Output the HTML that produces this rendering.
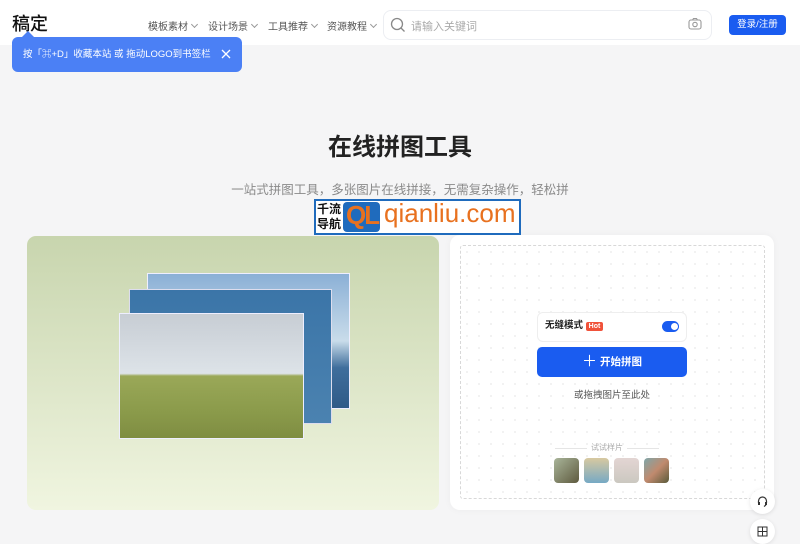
<!DOCTYPE html>
<html><head><meta charset="utf-8"><style>
*{margin:0;padding:0;box-sizing:border-box;white-space:nowrap}
body{width:800px;height:537px;overflow:hidden;background:#f5f5f6;font-family:"Liberation Sans","Noto Sans CJK SC",sans-serif;position:relative;color:#222}
.a{position:absolute}
.hdr{left:0;top:0;width:800px;height:45px;background:#fff}
.nav{top:18px;font-size:10px;color:#555}
.nav::after{content:"";display:inline-block;width:4px;height:4px;border-right:1px solid #999;border-bottom:1px solid #999;transform:rotate(45deg);margin-left:4px;vertical-align:3px}
.sp{width:25px;height:25px;border-radius:4px;top:458px}
</style></head><body>
<div class="a hdr"></div>
<div class="a" style="left:12px;top:10px;font-size:18px;font-weight:500;color:#111">稿定</div>
<div class="a nav" style="left:148px">模板素材</div>
<div class="a nav" style="left:208px">设计场景</div>
<div class="a nav" style="left:268px">工具推荐</div>
<div class="a nav" style="left:327px">资源教程</div>
<div class="a" style="left:383px;top:10px;width:329px;height:30px;border:1px solid #eceef2;border-radius:8px;background:#fff"></div>
<svg class="a" style="left:390px;top:17px" width="16" height="16" viewBox="0 0 16 16"><circle cx="7" cy="7" r="5.5" fill="none" stroke="#888" stroke-width="1.3"/><path d="M11 11l3.5 3.5" stroke="#888" stroke-width="1.3"/></svg>
<div class="a" style="left:411px;top:18px;font-size:11px;color:#aaa">请输入关键词</div>
<svg class="a" style="left:688px;top:17px" width="14" height="14" viewBox="0 0 14 14"><rect x="1" y="3" width="12" height="9" rx="2" fill="none" stroke="#999" stroke-width="1.1"/><path d="M4.5 3l1-1.5h3l1 1.5" fill="none" stroke="#999" stroke-width="1.1"/><circle cx="7" cy="7.5" r="2.2" fill="none" stroke="#999" stroke-width="1.1"/></svg>
<div class="a" style="left:729px;top:15px;width:57px;height:20px;background:#1a5cf0;border-radius:4px;color:#fff;font-size:9.5px;text-align:center;line-height:20px">登录/注册</div>
<div class="a" style="left:22px;top:31px;width:0;height:0;border-left:6px solid transparent;border-right:6px solid transparent;border-bottom:6px solid #4b80f5"></div>
<div class="a" style="left:12px;top:37px;width:230px;height:35px;background:#4b80f5;border-radius:6px;color:#fff;font-size:9.5px;line-height:35px;padding-left:11px">按「⌘+D」收藏本站 或 拖动LOGO到书签栏</div>
<svg class="a" style="left:221px;top:49px" width="10" height="10" viewBox="0 0 10 10"><path d="M1 1l8 8M9 1l-8 8" stroke="#fff" stroke-width="1.3"/></svg>
<div class="a" style="left:0;top:127px;width:800px;text-align:center;font-size:24px;font-weight:bold;color:#222">在线拼图工具</div>
<div class="a" style="left:0;top:179px;width:800px;text-align:center;font-size:12.5px;color:#8a8a8a">一站式拼图工具，多张图片在线拼接，无需复杂操作，轻松拼</div>
<div class="a" style="left:27px;top:236px;width:412px;height:274px;border-radius:9px;background:linear-gradient(#c8d5ae,#f0f5e0)"></div>
<div class="a" style="left:147px;top:273px;width:203px;height:136px;background:linear-gradient(#8bb0d6,#c9dcea 50%,#3f6e9c 70%,#2f5a88);border:1px solid #eef"></div>
<div class="a" style="left:129px;top:289px;width:203px;height:135px;background:linear-gradient(#3b75a8,#4b82b0);border:1px solid #dde"></div>
<div class="a" style="left:119px;top:313px;width:185px;height:126px;background:linear-gradient(#c7cdd4,#dde3e8 48%,#9aa858 50%,#8a9a4a 80%,#7f8d42);border:1px solid #eef"></div>
<div class="a" style="left:450px;top:235px;width:324px;height:275px;background:#fff;border-radius:10px;box-shadow:0 0 8px rgba(0,0,0,.04)"></div>
<div class="a" style="left:460px;top:245px;width:305px;height:254px;border:1px dashed #d8d8d8;border-radius:3px;background-image:radial-gradient(#eee 1px,transparent 1px);background-size:12px 12px"></div>
<div class="a" style="left:537px;top:312px;width:150px;height:30px;border:1px solid #eee;border-radius:6px;background:#fff"></div>
<div class="a" style="left:545px;top:320px;font-size:9.5px;font-weight:bold;line-height:12px">无缝模式</div>
<div class="a" style="left:586px;top:322px;width:17px;height:9px;background:#f0523a;border-radius:2px;color:#fff;font-size:7px;line-height:9px;text-align:center;font-weight:bold">Hot</div>
<div class="a" style="left:662px;top:321px;width:17px;height:11px;background:#1a5cf0;border-radius:6px"></div>
<div class="a" style="left:671px;top:323px;width:7px;height:7px;background:#fff;border-radius:50%"></div>
<div class="a" style="left:537px;top:347px;width:150px;height:30px;background:#1a5cf0;border-radius:5px;color:#fff;font-size:10.5px;font-weight:bold;text-align:center;line-height:30px"><span style="font-weight:normal;font-size:15px;vertical-align:-1px">＋</span> 开始拼图</div>
<div class="a" style="left:537px;top:387px;width:150px;text-align:center;font-size:9.5px;color:#555">或拖拽图片至此处</div>
<div class="a" style="left:555px;top:448px;width:32px;border-top:1px solid #e5e5e5"></div>
<div class="a" style="left:627px;top:448px;width:32px;border-top:1px solid #e5e5e5"></div>
<div class="a" style="left:587px;top:442px;width:40px;text-align:center;font-size:8px;color:#aaa">试试样片</div>
<div class="a sp" style="left:554px;background:linear-gradient(135deg,#a9b59a,#5e5a3e)"></div>
<div class="a sp" style="left:584px;background:linear-gradient(#d8c9a0,#76a9c4)"></div>
<div class="a sp" style="left:614px;background:linear-gradient(#e3d5d3,#cbc8c0)"></div>
<div class="a sp" style="left:644px;background:linear-gradient(135deg,#7ea6a9,#c08a6e,#5a5a3a)"></div>
<div class="a" style="left:750px;top:489px;width:25px;height:25px;border-radius:50%;background:#fff;box-shadow:0 1px 4px rgba(0,0,0,.1)"></div>
<svg class="a" style="left:756px;top:495px" width="13" height="13" viewBox="0 0 13 13"><path d="M2.5 8V6a4 4 0 018 0v2" fill="none" stroke="#333" stroke-width="1.2"/><rect x="2" y="7" width="2" height="3" fill="#333"/><rect x="9" y="7" width="2" height="3" fill="#333"/><path d="M10 10l-2 1.5" stroke="#333" stroke-width="1.1"/></svg>
<div class="a" style="left:750px;top:519px;width:25px;height:25px;border-radius:50%;background:#fff;box-shadow:0 1px 4px rgba(0,0,0,.1)"></div>
<svg class="a" style="left:757px;top:526px" width="11" height="11" viewBox="0 0 11 11"><rect x="1" y="1" width="9" height="9" fill="none" stroke="#333"/><path d="M5.5 1v9M1 5.5h9" stroke="#333"/></svg>
<div class="a" style="left:314px;top:199px;width:207px;height:36px;border:2px solid #1f6bbd;background:#fff"></div>
<div class="a" style="left:317px;top:202px;font-size:12px;line-height:15px;color:#111;font-weight:bold">千流<br>导航</div>
<div class="a" style="left:343px;top:202px;width:37px;height:30px;background:#1f6bbd;border-radius:4px"></div>
<div class="a" style="left:346px;top:200px;font-size:26px;font-weight:bold;color:#e8711f;letter-spacing:-2px">QL</div>
<div class="a" style="left:384px;top:198px;font-size:26px;color:#e8711f">qianliu.com</div>
</body></html>
